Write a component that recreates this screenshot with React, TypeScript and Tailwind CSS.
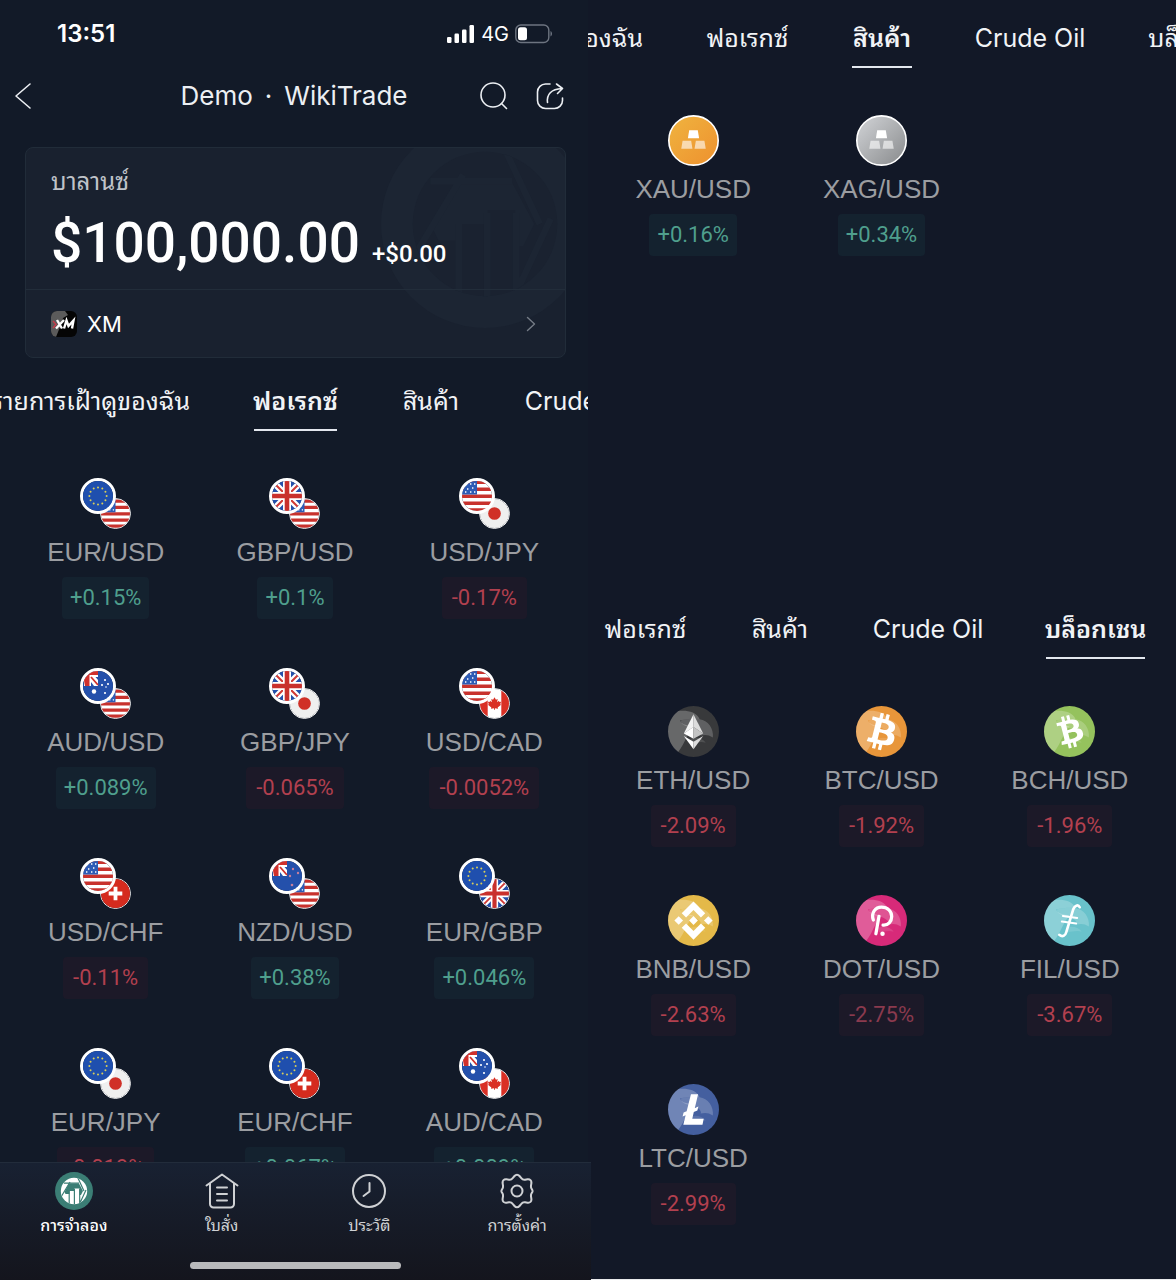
import React from "react";

type TabItem = { label: string; width: string; active?: boolean; cut?: boolean };
type Pair = { name: string; change: string; icon: React.ReactNode; dim?: boolean };

const starRing = Array.from({ length: 12 }, (_, i) => {
  const a = (i * Math.PI) / 6;
  return { x: 16 + 8.6 * Math.sin(a), y: 16 - 8.6 * Math.cos(a) };
});

const UnionJack = () => (
  <>
    <path fill="#2450ab" d="M0 0h32v32H0z" />
    <path d="M0 0l32 32M32 0L0 32" stroke="#fff" strokeWidth="6.5" />
    <path d="M0 0l32 32M32 0L0 32" stroke="#d03a35" strokeWidth="2" />
    <path d="M16 0v32M0 16h32" stroke="#fff" strokeWidth="8" />
    <path d="M16 0v32M0 16h32" stroke="#c9302c" strokeWidth="4.6" />
  </>
);

const Canton = () => (
  <>
    <path fill="#fff" d="M2 0h14v16H2z" />
    <path fill="#d0302c" d="M0 0h16v5H7.5v11H3z" />
    <path d="M9 7l7 8" stroke="#d0302c" strokeWidth="1.8" />
    <path d="M13.5 7H16v3zM9 12v4h3z" fill="#2450ab" />
  </>
);

const flags: Record<string, React.ReactNode> = {
  EUR: (
    <>
      <path fill="#1f4fae" d="M0 0h32v32H0z" />
      {starRing.map((s, i) => (
        <circle key={i} cx={s.x} cy={s.y} r="1" fill="#d9cf5a" />
      ))}
    </>
  ),
  USD: (
    <>
      <path fill="#fff" d="M0 0h32v32H0z" />
      <path
        d="M0 2.3h32M0 9.3h32M0 16.3h32M0 23.3h32M0 30h32"
        stroke="#c8322d"
        strokeWidth="3.6"
      />
      <path fill="#2d5bb5" d="M0 0h16v14.5H0z" />
      <path
        d="M4 5h1.4M9 4h1.4M13 4h1.4M6 9h1.4M11 8h1.4M4 12h1.4M9 12h1.4M13 12h1.4"
        stroke="#fff"
        strokeWidth="1.4"
      />
    </>
  ),
  GBP: <UnionJack />,
  JPY: (
    <>
      <path fill="#efefef" d="M0 0h32v32H0z" />
      <circle cx="16" cy="16" r="7" fill="#d03027" />
    </>
  ),
  AUD: (
    <>
      <path fill="#2450ab" d="M0 0h32v32H0z" />
      <Canton />
      <circle cx="12" cy="21.5" r="2.2" fill="#fff" />
      <g fill="#fff">
        <circle cx="23" cy="10" r="1.1" />
        <circle cx="20" cy="15" r="1.1" />
        <circle cx="26" cy="14" r="1.1" />
        <circle cx="24" cy="17" r=".8" />
        <circle cx="23" cy="23" r="1.1" />
      </g>
    </>
  ),
  NZD: (
    <>
      <path fill="#2450ab" d="M0 0h32v32H0z" />
      <Canton />
      <g fill="#c77f9d">
        <circle cx="22" cy="9" r="1.2" />
        <circle cx="19" cy="16" r="1.2" />
        <circle cx="27" cy="13" r="1.2" />
        <circle cx="21" cy="25" r="1.3" />
      </g>
    </>
  ),
  CAD: (
    <>
      <path fill="#fff" d="M0 0h32v32H0z" />
      <path fill="#d93025" d="M0 0h8.5v32H0zM23.5 0H32v32h-8.5z" />
      <path
        fill="#d93025"
        d="M16 9l1.6 2.8 1.9-.8-.6 3.6 2-1.6.5 1.3 1.9-.2-1 2.6 1 .8-3.8 2.8.4 1.5-3.4-.5V23h-1v-1.7l-3.4.5.4-1.5-3.8-2.8 1-.8-1-2.6 1.9.2.5-1.3 2 1.6-.6-3.6 1.9.8z"
      />
    </>
  ),
  CHF: (
    <>
      <path fill="#d52b1e" d="M0 0h32v32H0z" />
      <path d="M16 8.5v15M8.5 16h15" stroke="#fff" strokeWidth="4.2" />
    </>
  ),
};

const FlagPair = ({ base, quote }: { base: string; quote: string }) => (
  <div className="relative size-[51px]">
    <svg
      viewBox="0 0 32 32"
      className="absolute right-0 bottom-0 size-[31px] rounded-full border border-white/90"
    >
      {flags[quote]}
    </svg>
    <svg
      viewBox="1 1 30 30"
      className="absolute top-0 left-0 size-9 rounded-full border-[3px] border-white"
    >
      {flags[base]}
    </svg>
  </div>
);

// every coin carries the same pale swirl behind its mark
const Coin = ({ color, children }: { color: string; children: React.ReactNode }) => (
  <svg viewBox="0 0 50 50" className="size-[51px]">
    <circle cx="25" cy="25" r="25" fill={color} />
    <g fill="#fff">
      <path
        opacity=".24"
        d="M10 5C17 4 28 5 31 13c-6-1-12 0-19 1 1 5 8 5 13 6-7 8-8 16-15 25A25 25 0 0 1 10 5z"
      />
      <path opacity=".2" d="M31 13c8 1 14 9 13 18-4-3-8-3-12-2 2-4-6-8-13-9-5-1-7-4-6-6 6-1 12-2 18-1z" />
      <path opacity=".12" d="M22 32c6-2 12 0 15 4-6-2-11 1-15 0z" />
    </g>
    {children}
  </svg>
);

const BITCOIN =
  "M23.189 14.02c.314-2.096-1.283-3.223-3.465-3.975l.708-2.84-1.728-.43-.69 2.765c-.454-.114-.92-.22-1.385-.326l.695-2.783L15.596 6l-.708 2.839c-.376-.086-.746-.17-1.104-.26l.002-.009-2.384-.595-.46 1.846s1.283.294 1.256.312c.7.175.826.638.805 1.006l-.806 3.235c.048.012.11.03.18.057l-.183-.045-1.13 4.532c-.086.212-.303.531-.793.41.018.025-1.256-.313-1.256-.313l-.858 1.978 2.25.561c.418.105.828.215 1.231.318l-.715 2.872 1.727.43.708-2.84c.472.127.93.245 1.378.357l-.706 2.828 1.728.43.715-2.866c2.948.558 5.164.333 6.097-2.333.752-2.146-.037-3.385-1.588-4.192 1.13-.26 1.98-1.003 2.207-2.538zm-3.95 5.538c-.533 2.147-4.148.986-5.32.695l.95-3.805c1.172.293 4.929.872 4.37 3.11zm.535-5.569c-.487 1.953-3.495.96-4.47.717l.86-3.45c.975.243 4.118.696 3.61 2.733z";

const Bars = ({ from, to, id }: { from: string; to: string; id: string }) => (
  <svg viewBox="0 0 50 50" className="size-[51px]">
    <defs>
      <linearGradient id={id} x1="0" y1="0" x2="1" y2="1">
        <stop offset=".2" stopColor={from} />
        <stop offset=".9" stopColor={to} />
      </linearGradient>
    </defs>
    <circle cx="25" cy="25" r="24.2" fill={`url(#${id})`} stroke="#fff" strokeWidth="1.6" />
    <path fill="#fff" d="M20.8 15h8.4l1.3 7.8h-11z" />
    <path fill="#fff" opacity=".6" d="M14.3 25.2h8.4l1.3 7.8H13zM27.3 25.2h8.4L37 33H26z" />
  </svg>
);

const fx = (name: string, change: string): Pair => {
  const [base, quote] = name.split("/");
  return { name, change, icon: <FlagPair base={base} quote={quote} /> };
};

const forex = [
  fx("EUR/USD", "+0.15%"),
  fx("GBP/USD", "+0.1%"),
  fx("USD/JPY", "-0.17%"),
  fx("AUD/USD", "+0.089%"),
  fx("GBP/JPY", "-0.065%"),
  fx("USD/CAD", "-0.0052%"),
  fx("USD/CHF", "-0.11%"),
  fx("NZD/USD", "+0.38%"),
  fx("EUR/GBP", "+0.046%"),
  fx("EUR/JPY", "-0.019%"),
  fx("EUR/CHF", "+0.067%"),
  fx("AUD/CAD", "+0.009%"),
];

const metals: Pair[] = [
  { name: "XAU/USD", change: "+0.16%", icon: <Bars id="gold" from="#efad3c" to="#ee9430" /> },
  { name: "XAG/USD", change: "+0.34%", icon: <Bars id="silver" from="#c4c6c9" to="#8f9193" /> },
];

const coins: Pair[] = [
  {
    name: "ETH/USD",
    change: "-2.09%",
    icon: (
      <Coin color="#38393b">
        <path fill="#f2f2f2" d="M25 8v12.5L15.5 27z" />
        <path fill="#fff" d="M15.5 27L25 20.5V32z" />
        <path fill="#dcdcdc" d="M25 8l9.5 19-9.5-6.5z" />
        <path fill="#c4c4c4" d="M25 20.5l9.5 6.5-9.5 5z" />
        <path fill="#fff" d="M15.5 29.5L25 35v7.5z" />
        <path fill="#dcdcdc" d="M34.5 29.5L25 35v7.5z" />
      </Coin>
    ),
  },
  {
    name: "BTC/USD",
    change: "-1.92%",
    icon: (
      <Coin color="#e8963a">
        <path fill="#fff" d={BITCOIN} transform="translate(-4.6 -4.6) scale(1.85)" />
      </Coin>
    ),
  },
  {
    name: "BCH/USD",
    change: "-1.96%",
    icon: (
      <Coin color="#95c25d">
        <path
          fill="#fff"
          d={BITCOIN}
          transform="rotate(-28 25 25) translate(-1.4 -1.4) scale(1.65)"
        />
      </Coin>
    ),
  },
  {
    name: "BNB/USD",
    change: "-2.63%",
    icon: (
      <Coin color="#e4b949">
        <path
          fill="#fff"
          transform="translate(-5 -5) scale(1.875)"
          d="M12.116 14.404L16 10.52l3.886 3.886 2.26-2.26L16 6l-6.144 6.144 2.26 2.26zM6 16l2.26-2.26L10.52 16l-2.26 2.26L6 16zm6.116 1.596L16 21.48l3.886-3.886 2.26 2.259L16 26l-6.144-6.144-.003-.003 2.263-2.257zM21.48 16l2.26-2.26L26 16l-2.26 2.26L21.48 16zM18.294 16L16 18.294 13.705 16 16 13.706z"
        />
      </Coin>
    ),
  },
  {
    name: "DOT/USD",
    change: "-2.75%",
    dim: true,
    icon: (
      <Coin color="#d72a79">
        <path
          d="M17 24.5c-2.5-7 2-12.500 8-12.500 6 0 10 4 10 9S31.500 30 26.500 29.500M22.500 21l-3 17"
          fill="none"
          stroke="#fff"
          strokeWidth="3.2"
          strokeLinecap="round"
        />
        <circle cx="26" cy="38" r="2.2" fill="#fff" />
      </Coin>
    ),
  },
  {
    name: "FIL/USD",
    change: "-3.67%",
    icon: (
      <Coin color="#69c2cb">
        <path
          d="M35 12c-1.5-3-5-2-6.5 2.5L22 36c-1 4-4 5.5-7 3"
          fill="none"
          stroke="#fff"
          strokeWidth="2.6"
          strokeLinecap="round"
        />
        <path d="M18.5 20.5l14 2M17.5 26l14 2" stroke="#fff" strokeWidth="2" strokeLinecap="round" />
      </Coin>
    ),
  },
  {
    name: "LTC/USD",
    change: "-2.99%",
    icon: (
      <Coin color="#445f9f">
        <path
          fill="#fff"
          d="M22.500 10h7l-3.200 13.500 3.500-1.400-1 4-3.500 1.400-1.500 6.500H35L33.800 40H15l2.300-9.300-3 1.200 1-4 3-1.200z"
        />
      </Coin>
    ),
  },
];

const Tabs = ({ items, className = "" }: { items: TabItem[]; className?: string }) => (
  <nav className={`flex overflow-hidden ${className}`}>
    {items.map((t) => (
      <button
        key={t.label}
        className={`flex h-[47px] shrink-0 border-b-2 text-[25px] leading-[34px] whitespace-nowrap text-[#f1f3f6] ${t.width} ${
          t.cut ? "justify-end" : "justify-center"
        } ${t.active ? "border-[#e3e7ee] font-semibold" : "border-transparent"}`}
      >
        {t.label}
      </button>
    ))}
  </nav>
);

const PairGrid = ({ pairs, className = "" }: { pairs: Pair[]; className?: string }) => (
  <ul className={`grid grid-cols-3 ${className}`}>
    {pairs.map((p) => (
      <li key={p.name} className="flex flex-col items-center">
        {p.icon}
        <span className="mt-[7px] font-['Liberation_Sans',sans-serif] text-[26px] leading-8 text-[#9b9da1]">
          {p.name}
        </span>
        <span
          className={`mt-[9px] rounded font-[Roboto,sans-serif] text-[22px] leading-[42px] ${
            p.change.startsWith("+")
              ? "bg-[#14222f] px-2 text-[#4f9f8d]"
              : p.dim
                ? "bg-[#1c1928] px-[10px] text-[#8a3a4e]"
                : "bg-[#1c1928] px-[10px] text-[#b2404f]"
          }`}
        >
          {p.change}
        </span>
      </li>
    ))}
  </ul>
);

// aperture blades around a rising bar chart
const WikiMark = ({ className, fill, cut }: { className: string; fill: string; cut: string }) => (
  <svg viewBox="0 0 38 38" className={className}>
    <clipPath id="wiki-disc">
      <circle cx="19" cy="19" r="13.2" />
    </clipPath>
    <circle cx="19" cy="19" r="19" fill={fill} />
    <g clipPath="url(#wiki-disc)">
      <path fill={cut} d="M5 5h28v28H5z" />
      <path fill={fill} d="M14 11.500h10l4 7.500-2 4h-1.500v-6.500H19.500V19h-5v3H10.500L9.500 20z" />
      <path
        d="M9 11.200h15M22 4l7 15M15 10L6 25M31 18l-6.500 14M14.200 19v15M19.400 17v17M24.700 17v17"
        fill="none"
        stroke={fill}
        strokeWidth="1.2"
      />
    </g>
  </svg>
);

const line = {
  fill: "none",
  stroke: "currentColor",
  strokeWidth: 2,
  strokeLinecap: "round",
  strokeLinejoin: "round",
} as const;

const navItems = [
  {
    label: "การจำลอง",
    active: true,
    icon: <WikiMark className="size-[38px]" fill="#3b7e75" cut="#fff" />,
  },
  {
    label: "ใบสั่ง",
    icon: (
      <svg viewBox="0 0 38 38" className="size-[38px]" {...line}>
        <path d="M3.5 13.5L19 2.5l15.5 11M7 11.5V32a3.5 3.5 0 0 0 3.5 3.5h17A3.5 3.5 0 0 0 31 32V11.5M14 15.5h10M14 22h10M14 28.5h10" />
      </svg>
    ),
  },
  {
    label: "ประวัติ",
    icon: (
      <svg viewBox="0 0 38 38" className="size-[38px]" {...line}>
        <circle cx="19" cy="19" r="16" />
        <path d="M19.5 11v8.5l-6 4.500" />
      </svg>
    ),
  },
  {
    label: "การตั้งค่า",
    icon: (
      <svg viewBox="0 0 38 38" className="size-[38px]" {...line}>
        <circle cx="19" cy="19" r="5.5" />
        <path d="M16.5 4c1.5-1.8 3.5-1.8 5 0l1.8 2.2c1 1.3 2.2 1.8 3.8 1.5l2.4-.4c2.5-.4 4.2 1.3 3.9 3.7l-.4 2.7c-.2 1.3 0 2 .6 3l.6 1c.5.9.5 1.7 0 2.6l-.6 1c-.6 1-.8 1.700-.6 3l.4 2.700c.3 2.400-1.400 4.100-3.900 3.700l-2.400-.4c-1.600-.3-2.800.2-3.800 1.500L21.500 34c-1.500 1.800-3.500 1.800-5 0l-1.800-2.200c-1-1.300-2.200-1.800-3.800-1.500l-2.400.4c-2.500.4-4.200-1.300-3.900-3.700l.4-2.700c.2-1.300 0-2-.6-3l-.6-1c-.5-.9-.5-1.700 0-2.600l.6-1c.6-1 .8-1.700.6-3L4.600 11c-.3-2.400 1.400-4.100 3.900-3.700l2.400.4c1.600.3 2.800-.2 3.800-1.500z" />
      </svg>
    ),
  },
];

const StatusBar = () => (
  <div className="flex h-[68px] items-center justify-between pr-[35px] pl-[57px] text-white">
    <span className="text-[24px] leading-8 font-semibold">13:51</span>
    <div className="flex items-center gap-[6px]">
      <svg viewBox="0 0 28 18" className="h-[18px] w-7" fill="#fff">
        <rect x="0" y="12" width="4.5" height="6" rx="1.2" />
        <rect x="7.5" y="8.5" width="4.5" height="9.5" rx="1.2" />
        <rect x="15" y="4.5" width="4.5" height="13.5" rx="1.2" />
        <rect x="22.5" y="0" width="4.5" height="18" rx="1.2" />
      </svg>
      <span className="text-[20px] leading-8">4G</span>
      <svg viewBox="0 0 38 20" className="h-5 w-[38px]">
        <rect x=".8" y="1" width="33" height="17.5" rx="5" fill="none" stroke="#6d7480" strokeWidth="1.4" />
        <rect x="3" y="3.3" width="9" height="13" rx="2.5" fill="#fff" />
        <path d="M35.5 7v5.5c2-1 2-4.5 0-5.500z" fill="#6d7480" />
      </svg>
    </div>
  </div>
);

const Header = () => (
  <header className="relative flex h-14 items-center justify-between px-3 text-[#eceff3]">
    <button aria-label="Back">
      <svg viewBox="0 0 24 32" className="h-8 w-6" {...line} strokeWidth={1.6}>
        <path d="M18 4L4 16 18 28" />
      </svg>
    </button>
    <h1 className="absolute inset-x-0 flex justify-center gap-3 text-[26px] leading-8">
      <span>Demo</span>
      <span>·</span>
      <span>WikiTrade</span>
    </h1>
    <div className="relative flex gap-6 pr-[10px]">
      <button aria-label="Search">
        <svg viewBox="0 0 32 32" className="size-8" {...line} strokeWidth={1.6}>
          <circle cx="15" cy="15" r="12" />
          <path d="M23.5 23.5l5 5" />
        </svg>
      </button>
      <button aria-label="Share">
        <svg viewBox="0 0 32 32" className="size-8" {...line} strokeWidth={1.6}>
          <path d="M16 4h-4.5A8 8 0 0 0 3.5 12v8.5a8 8 0 0 0 8 8h9a8 8 0 0 0 8-8V18" />
          <path d="M13.5 22.5c-1-8 3.5-13.500 14.500-14M22.500 4L28.500 8.500l-5 5" />
        </svg>
      </button>
    </div>
  </header>
);

const BalanceCard = () => (
  <section className="relative mt-[23px] mr-[22px] ml-[25px] overflow-hidden rounded-lg border border-[#212c39] bg-[#19212f] text-white">
    <WikiMark className="absolute -top-7 -right-6 size-[208px]" fill="#1c2533" cut="#1a2230" />
    <div className="relative flex h-[142px] flex-col justify-between border-b border-[#222d3a] px-[25px] pt-[18px] pb-[10px]">
      <p className="text-2xl leading-8 text-[#bfc3c9]">บาลานซ์</p>
      <p className="flex items-baseline gap-3 font-[Roboto,sans-serif] font-medium">
        <span className="text-[55px] leading-[72px]">$100,000.00</span>
        <span className="text-2xl">+$0.00</span>
      </p>
    </div>
    <button className="relative flex h-[67px] w-full items-center gap-[10px] px-[25px]">
      <svg viewBox="0 0 26 26" className="size-[26px] rounded-md">
        <path fill="#050505" d="M0 0h26v26H0z" />
        <path fill="#5b5b5b" d="M0 0h14l3 4-5 3-1 4-6 15H0z" />
        <path d="M2 10l3 3.5L2 17" fill="none" stroke="#c43b4b" strokeWidth="1.5" />
        <path
          d="M6 9l5 8.5M13 9l-8 8.5M13 17.5L15.5 9.500l2 5.500L22.500 9.500 21 17.500"
          fill="none"
          stroke="#fff"
          strokeWidth="2.4"
        />
      </svg>
      <span className="text-[22px] leading-8">XM</span>
      <svg viewBox="0 0 10 16" className="mr-1 ml-auto h-4 w-[10px] text-[#757c86]" {...line} strokeWidth={1.4}>
        <path d="M1.5 1.5L8.5 8l-7 6.5" />
      </svg>
    </button>
  </section>
);

const BottomNav = () => (
  <nav className="relative z-10 -mr-[3px] flex h-[118px] shrink-0 flex-col justify-between border-t border-[#222c3b] bg-linear-to-b from-[#182132] to-[#14151d] pb-[11px]">
    <div className="grid grid-cols-4">
      {navItems.map((n) => (
        <a
          key={n.label}
          href="#"
          className={`flex flex-col items-center pt-[9px] text-base leading-[30px] ${
            n.active ? "font-medium text-white" : "text-[#cfd1d4]"
          }`}
        >
          {n.icon}
          {n.label}
        </a>
      ))}
    </div>
    <div className="mx-auto h-[7px] w-[211px] rounded-full bg-[#b9babc]" />
  </nav>
);

export default function App() {
  return (
    <main className="grid min-h-screen grid-cols-2 bg-[#121a28] font-[Inter,'Noto_Sans_Thai_Looped','Loma','Garuda','Waree','Noto_Sans',sans-serif]">
      <div className="flex h-screen flex-col">
        <StatusBar />
        <Header />
        <BalanceCard />
        <Tabs
          className="mt-[26px] shrink-0 gap-16"
          items={[
            { label: "รายการเฝ้าดูของฉัน", width: "w-[190px]", cut: true },
            { label: "ฟอเรกซ์", width: "w-[83px]", active: true },
            { label: "สินค้า", width: "w-[60px]" },
            { label: "Crude Oil", width: "w-[110px]" },
          ]}
        />
        <PairGrid pairs={forex} className="min-h-0 flex-1 auto-rows-[190px] overflow-hidden pt-[47px] pr-[9px] pl-[11px]" />
        <BottomNav />
      </div>

      <div className="grid grid-rows-[591fr_688fr] border-b border-[#e9eaec] bg-[#121827]">
        <section className="min-w-0 pt-[21px]">
          <Tabs
            className="gap-[63px]"
            items={[
              { label: "องฉัน", width: "w-[55px]", cut: true },
              { label: "ฟอเรกซ์", width: "w-[83px]" },
              { label: "สินค้า", width: "w-[60px]", active: true },
              { label: "Crude Oil", width: "w-[110px]" },
              { label: "บล็อกเชน", width: "w-[99px]" },
            ]}
          />
          <PairGrid pairs={metals} className="pt-[47px] pr-3 pl-[11px]" />
        </section>
        <section className="min-w-0 pt-[21px]">
          <Tabs
            className="gap-[63px] pl-4"
            items={[
              { label: "ฟอเรกซ์", width: "w-[83px]" },
              { label: "สินค้า", width: "w-[60px]" },
              { label: "Crude Oil", width: "w-[110px]" },
              { label: "บล็อกเชน", width: "w-[99px]", active: true },
            ]}
          />
          <PairGrid pairs={coins} className="auto-rows-[189px] pt-[47px] pr-3 pl-[11px]" />
        </section>
      </div>
    </main>
  );
}
